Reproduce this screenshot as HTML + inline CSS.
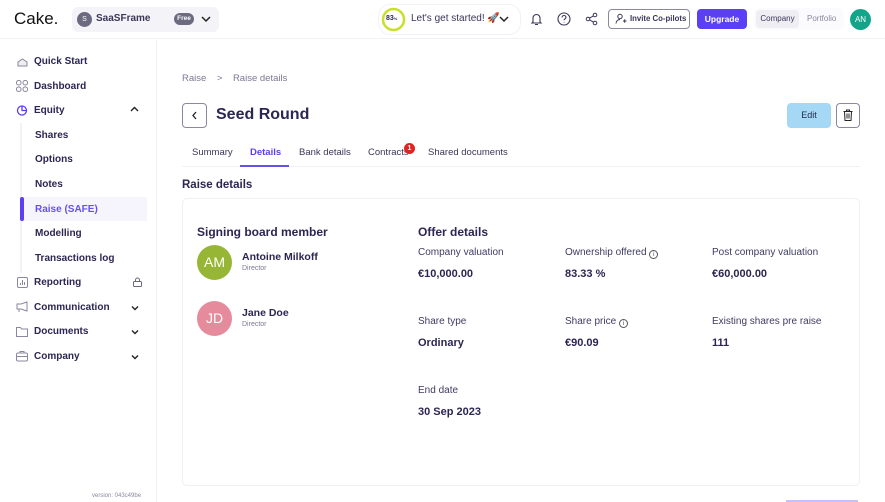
<!DOCTYPE html>
<html><head><meta charset="utf-8">
<style>
*{box-sizing:border-box;margin:0;padding:0}
body{width:885px;height:502px;overflow:hidden;background:#fff;font-family:"Liberation Sans",sans-serif;color:#2b2653;position:relative}
.a{position:absolute;white-space:nowrap}
.nav{font-size:10px;font-weight:bold;color:#2b2653}
.sub{font-size:10px;color:#2b2653}
.lbl{font-size:10px;color:#3f3b63}
.val{font-size:11px;font-weight:bold;color:#2b2653}
svg{position:absolute}
</style></head><body>
<div class="a" style="left:0;top:0;width:885px;height:39px;border-bottom:1px solid #f0f0f5"></div>
<div class="a" style="left:14px;top:9px;font-size:17px;color:#111">Cake.</div>
<div class="a" style="left:72px;top:7px;width:147px;height:25px;background:#f4f4f8;border-radius:6px"></div>
<div class="a" style="left:77px;top:12px;width:15px;height:15px;border-radius:50%;background:#6c6a80;color:#fff;font-size:7px;text-align:center;line-height:15px">S</div>
<div class="a" style="left:96px;top:13px;font-size:10px;font-weight:bold;color:#3a3658">SaaSFrame</div>
<div class="a" style="left:174px;top:13px;width:20px;height:12px;border-radius:6px;background:#6c6a80;color:#fff;font-size:6.5px;text-align:center;line-height:12px;font-weight:bold">Free</div>
<svg style="left:201px;top:15px" width="10" height="8" viewBox="0 0 10 8"><path d="M1 2l4 4 4-4" stroke="#222" stroke-width="1.5" fill="none"/></svg>

<div class="a" style="left:378px;top:4px;width:143px;height:31px;border-radius:12px;border:1px solid #f2f2f6"></div>
<svg style="left:381px;top:7px" width="25" height="25" viewBox="0 0 25 25"><circle cx="12.5" cy="12.5" r="10.5" stroke="#c9e02a" stroke-width="2.5" fill="#fff"/></svg>
<div class="a" style="left:386px;top:15px;font-size:7px;font-weight:bold">83<span style="font-size:4px">%</span></div>
<div class="a" style="left:411px;top:13px;font-size:10px;color:#3a3658">Let's get started! 🚀</div>
<svg style="left:499px;top:15px" width="10" height="8" viewBox="0 0 10 8"><path d="M1 2l4 4 4-4" stroke="#222" stroke-width="1.5" fill="none"/></svg>

<svg style="left:530px;top:12px" width="13" height="14" viewBox="0 0 13 14"><path d="M3 10V6a3.5 3.5 0 017 0v4l1 1H2z M5 12.5h3" stroke="#3a3658" stroke-width="1.1" fill="none"/></svg>
<svg style="left:557px;top:12px" width="14" height="14" viewBox="0 0 14 14"><circle cx="7" cy="7" r="6" stroke="#3a3658" stroke-width="1.1" fill="none"/><path d="M5 5.5a2 2 0 114 0c0 1.2-2 1.4-2 2.8M7 10v.5" stroke="#3a3658" stroke-width="1.1" fill="none"/></svg>
<svg style="left:585px;top:12px" width="13" height="14" viewBox="0 0 13 14"><circle cx="3" cy="7" r="1.8" stroke="#3a3658" fill="none"/><circle cx="10" cy="3" r="1.8" stroke="#3a3658" fill="none"/><circle cx="10" cy="11" r="1.8" stroke="#3a3658" fill="none"/><path d="M4.6 6.1l3.8-2.2M4.6 7.9l3.8 2.2" stroke="#3a3658"/></svg>
<div class="a" style="left:608px;top:9px;width:82px;height:20px;border:1px solid #8a88a0;border-radius:4px"></div>
<svg style="left:615px;top:13px" width="12" height="12" viewBox="0 0 12 12"><circle cx="5" cy="3.5" r="2.2" stroke="#3a3658" fill="none"/><path d="M1 10.5c0-2.5 2-4 4-4M8 8h3.5M9.7 6.3v3.5" stroke="#3a3658" fill="none"/></svg>
<div class="a" style="left:630px;top:14px;font-size:7.8px;font-weight:bold;color:#3a3658">Invite Co-pilots</div>
<div class="a" style="left:697px;top:9px;width:50px;height:20px;background:#5b3ff5;border-radius:4px;color:#fff;font-size:8.5px;font-weight:bold;text-align:center;line-height:20px">Upgrade</div>
<div class="a" style="left:754px;top:8px;width:90px;height:22px;border-radius:5px;background:#fbfbfd"></div>
<div class="a" style="left:756px;top:10px;width:43px;height:18px;border-radius:4px;background:#eeeef3;font-size:8px;text-align:center;line-height:18px;color:#3a3658">Company</div>
<div class="a" style="left:807px;top:14px;font-size:8px;color:#8a88a0">Portfolio</div>
<div class="a" style="left:850px;top:9px;width:21px;height:21px;border-radius:50%;background:#13a58a;color:#fff;font-size:8px;text-align:center;line-height:21px">AN</div>

<div class="a" style="left:156px;top:40px;width:1px;height:462px;background:#f0f0f5"></div>
<svg style="left:17px;top:56px" width="11" height="11" viewBox="0 0 11 11"><path d="M1 10h9V6L5.5 3 1 6z" stroke="#8a88a0" fill="#eee"/></svg>
<div class="a nav" style="left:34px;top:56px">Quick Start</div>
<svg style="left:16px;top:80px" width="12" height="12" viewBox="0 0 12 12"><g stroke="#8a88a0" fill="none"><rect x="0.5" y="0.5" width="4.5" height="4.5" rx="2"/><rect x="7" y="0.5" width="4.5" height="4.5" rx="2"/><rect x="0.5" y="7" width="4.5" height="4.5" rx="2"/><rect x="7" y="7" width="4.5" height="4.5" rx="2"/></g></svg>
<div class="a nav" style="left:34px;top:81px">Dashboard</div>
<svg style="left:16px;top:104px" width="12" height="12" viewBox="0 0 12 12"><circle cx="6" cy="6.5" r="4.5" stroke="#5b3ff5" stroke-width="1.3" fill="none"/><path d="M6 2v4.5h4.5" stroke="#5b3ff5" stroke-width="1.3" fill="none"/></svg>
<div class="a nav" style="left:34px;top:105px">Equity</div>
<svg style="left:130px;top:106px" width="9" height="6" viewBox="0 0 9 6"><path d="M1 5l3.5-3.5L8 5" stroke="#222" stroke-width="1.4" fill="none"/></svg>
<div class="a" style="left:20px;top:123px;width:2px;height:150px;background:#f3f3f7"></div>
<div class="a sub" style="left:35px;top:130px;font-weight:bold">Shares</div>
<div class="a sub" style="left:35px;top:154px;font-weight:bold">Options</div>
<div class="a sub" style="left:35px;top:179px;font-weight:bold">Notes</div>
<div class="a" style="left:22px;top:197px;width:125px;height:24px;background:#f6f5fd"></div>
<div class="a" style="left:20px;top:197px;width:4px;height:24px;background:#5b3ff5;border-radius:2px"></div>
<div class="a sub" style="left:35px;top:204px;font-weight:bold;color:#6650f0">Raise (SAFE)</div>
<div class="a sub" style="left:35px;top:228px;font-weight:bold">Modelling</div>
<div class="a sub" style="left:35px;top:253px;font-weight:bold">Transactions log</div>
<svg style="left:17px;top:277px" width="11" height="11" viewBox="0 0 11 11"><rect x="0.5" y="0.5" width="10" height="10" rx="1.5" stroke="#8a88a0" fill="none"/><path d="M3.5 8V6M5.5 8V3M7.5 8V5" stroke="#8a88a0"/></svg>
<div class="a nav" style="left:34px;top:277px">Reporting</div>
<svg style="left:133px;top:277px" width="9" height="10" viewBox="0 0 9 10"><rect x="0.5" y="4.5" width="8" height="5" rx="1" stroke="#6c6a80" fill="none"/><path d="M2.5 4.5V3a2 2 0 014 0v1.5" stroke="#6c6a80" fill="none"/></svg>
<svg style="left:16px;top:301px" width="13" height="12" viewBox="0 0 13 12"><path d="M1 3h4l6-2v9L5 8H1z M3 8v3" stroke="#8a88a0" fill="none"/></svg>
<div class="a nav" style="left:34px;top:302px">Communication</div>
<svg style="left:16px;top:326px" width="12" height="11" viewBox="0 0 12 11"><path d="M0.5 1.5h4l1 1.5h6v7.5h-11z" stroke="#8a88a0" fill="none"/></svg>
<div class="a nav" style="left:34px;top:326px">Documents</div>
<svg style="left:16px;top:350px" width="12" height="12" viewBox="0 0 12 12"><rect x="0.5" y="3" width="11" height="8" rx="1.5" stroke="#8a88a0" fill="none"/><path d="M4 3V1.5h4V3M0.5 6.5h11" stroke="#8a88a0" fill="none"/></svg>
<div class="a nav" style="left:34px;top:351px">Company</div>
<svg style="left:131px;top:305px" width="8" height="6" viewBox="0 0 8 6"><path d="M1 1.5l3 3 3-3" stroke="#222" stroke-width="1.4" fill="none"/></svg>
<svg style="left:131px;top:329px" width="8" height="6" viewBox="0 0 8 6"><path d="M1 1.5l3 3 3-3" stroke="#222" stroke-width="1.4" fill="none"/></svg>
<svg style="left:131px;top:354px" width="8" height="6" viewBox="0 0 8 6"><path d="M1 1.5l3 3 3-3" stroke="#222" stroke-width="1.4" fill="none"/></svg>
<div class="a" style="left:92px;top:493px;font-size:6px;color:#8a88a0">version: 043c49be</div>

<div class="a" style="left:182px;top:73px;font-size:9.5px;color:#7a7894">Raise &nbsp;&nbsp;&nbsp;&gt;&nbsp;&nbsp;&nbsp; Raise details</div>
<div class="a" style="left:182px;top:103px;width:25px;height:25px;border:1px solid #8a88a0;border-radius:4px"></div>
<svg style="left:191px;top:111px" width="7" height="9" viewBox="0 0 7 9"><path d="M5 1L2 4.5 5 8" stroke="#222" stroke-width="1.3" fill="none"/></svg>
<div class="a" style="left:216px;top:106px;font-size:16px;font-weight:bold">Seed Round</div>
<div class="a" style="left:787px;top:103px;width:44px;height:25px;background:#a5d8f5;border-radius:4px;font-size:9px;text-align:center;line-height:25px;color:#1e2a4a">Edit</div>
<div class="a" style="left:836px;top:103px;width:24px;height:25px;border:1px solid #8a88a0;border-radius:4px"></div>
<svg style="left:843px;top:109px" width="10" height="12" viewBox="0 0 10 12"><path d="M0.5 2.5h9M3.5 2.5V1h3v1.5M1.5 2.5l.5 9h6l.5-9M4 4.5v5M6 4.5v5" stroke="#222" fill="none"/></svg>

<div class="a" style="left:182px;top:166px;width:678px;height:1px;background:#f0f0f5"></div>
<div class="a" style="left:192px;top:147px;font-size:9.5px;color:#3a3658">Summary</div>
<div class="a" style="left:250px;top:147px;font-size:9.5px;font-weight:bold;color:#5b3ff5">Details</div>
<div class="a" style="left:240px;top:165px;width:49px;height:2px;background:#6650f0"></div>
<div class="a" style="left:299px;top:147px;font-size:9.5px;color:#3a3658">Bank details</div>
<div class="a" style="left:368px;top:147px;font-size:9.5px;color:#3a3658">Contracts</div>
<div class="a" style="left:404px;top:143px;width:11px;height:11px;border-radius:50%;background:#e02424;color:#fff;font-size:7px;font-weight:bold;text-align:center;line-height:11px">1</div>
<div class="a" style="left:428px;top:147px;font-size:9.5px;color:#3a3658">Shared documents</div>

<div class="a" style="left:182px;top:179px;font-size:11.5px;font-weight:bold">Raise details</div>
<div class="a" style="left:182px;top:198px;width:678px;height:288px;border:1px solid #efeff4;border-radius:5px;background:#fff"></div>

<div class="a" style="left:197px;top:225px;font-size:12px;font-weight:bold">Signing board member</div>
<div class="a" style="left:197px;top:245px;width:35px;height:35px;border-radius:50%;background:#98b636;color:#fff;font-size:14px;text-align:center;line-height:35px">AM</div>
<div class="a" style="left:242px;top:251px;font-size:10.5px;font-weight:bold">Antoine Milkoff</div>
<div class="a" style="left:242px;top:265px;font-size:7px;color:#7a7894">Director</div>
<div class="a" style="left:197px;top:301px;width:35px;height:35px;border-radius:50%;background:#e58b9c;color:#fff;font-size:14px;text-align:center;line-height:35px">JD</div>
<div class="a" style="left:242px;top:307px;font-size:10.5px;font-weight:bold">Jane Doe</div>
<div class="a" style="left:242px;top:321px;font-size:7px;color:#7a7894">Director</div>

<div class="a" style="left:418px;top:225px;font-size:12px;font-weight:bold">Offer details</div>
<div class="a lbl" style="left:418px;top:247px">Company valuation</div>
<div class="a val" style="left:418px;top:268px">€10,000.00</div>
<div class="a lbl" style="left:565px;top:247px">Ownership offered <span style="display:inline-block;width:9px;height:9px;border:1px solid #555;border-radius:50%;font-size:6px;text-align:center;line-height:8px;vertical-align:-1px">i</span></div>
<div class="a val" style="left:565px;top:268px">83.33 %</div>
<div class="a lbl" style="left:712px;top:247px">Post company valuation</div>
<div class="a val" style="left:712px;top:268px">€60,000.00</div>

<div class="a lbl" style="left:418px;top:316px">Share type</div>
<div class="a val" style="left:418px;top:337px">Ordinary</div>
<div class="a lbl" style="left:565px;top:316px">Share price <span style="display:inline-block;width:9px;height:9px;border:1px solid #555;border-radius:50%;font-size:6px;text-align:center;line-height:8px;vertical-align:-1px">i</span></div>
<div class="a val" style="left:565px;top:337px">€90.09</div>
<div class="a lbl" style="left:712px;top:316px">Existing shares pre raise</div>
<div class="a val" style="left:712px;top:337px">111</div>

<div class="a lbl" style="left:418px;top:385px">End date</div>
<div class="a val" style="left:418px;top:406px">30 Sep 2023</div>

<div class="a" style="left:786px;top:500px;width:72px;height:2px;background:#c8c0f8"></div>
</body></html>
